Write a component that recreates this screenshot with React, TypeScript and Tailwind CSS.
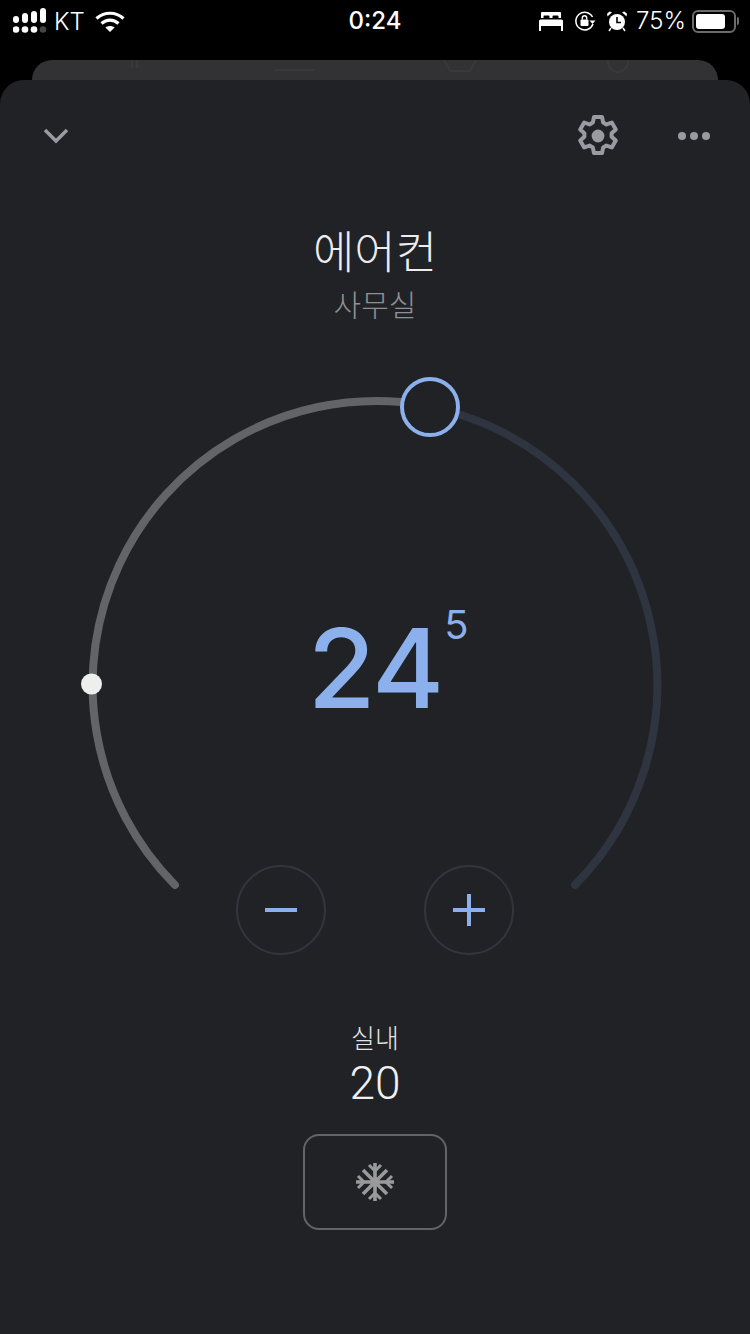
const sans = "font-['Roboto','Noto_Sans_CJK_KR',sans-serif]";
const inter = "font-['Inter',sans-serif]";

function SignalDots() {
  const bars = [
    { x: 0, h: 7 },
    { x: 9, h: 10 },
    { x: 18, h: 12 },
    { x: 27, h: 15 },
  ];
  return (
    <svg width="34" height="32" viewBox="0 0 34 32">
      {bars.map((b, i) => (
        <rect key={i} x={b.x} y={17 - b.h} width="6" height={b.h} rx="3" fill="#fff" />
      ))}
      {[3, 12, 21].map((x) => (
        <circle key={x} cx={x} cy="23.500" r="3.300" fill="#fff" />
      ))}
      <circle cx="30" cy="23.500" r="3.300" fill="#444" />
    </svg>
  );
}

function Wifi() {
  return (
    <svg width="30" height="22" viewBox="0 0 30 22" fill="none" stroke="#fff" strokeWidth="3.200">
      <path d="M1.500 7.500C9 .5 21 .5 28.500 7.500" />
      <path d="M6.500 12.500C11.500 8 18.500 8 23.500 12.500" />
      <path d="M15 21l-4.600-4.600c2.600-2 6.600-2 9.200 0z" fill="#fff" stroke="none" />
    </svg>
  );
}

function Bed() {
  return (
    <svg width="24" height="20" viewBox="0 0 24 20" fill="#fff">
      <path d="M3 1h18a1 1 0 0 1 1 1v5h-2.500V5.500a1 1 0 0 0-1-1h-4a1 1 0 0 0-1 1V7h-3V5.500a1 1 0 0 0-1-1h-4a1 1 0 0 0-1 1V7H2V2a1 1 0 0 1 1-1z" />
      <path d="M1.500 8.500h21A1.500 1.500 0 0 1 24 10v5H0v-5a1.500 1.500 0 0 1 1.500-1.500z" />
      <rect x="0" y="15" width="2" height="5" />
      <rect x="22" y="15" width="2" height="5" />
    </svg>
  );
}

function RotationLock() {
  return (
    <svg width="22" height="22" viewBox="0 0 22 22" fill="none">
      <path d="M18.500 7A8.800 8.800 0 1 0 19 14" stroke="#fff" strokeWidth="1.500" />
      <path d="M15.500 10.500h6l-3 3.500z" fill="#fff" />
      <rect x="6.500" y="9.500" width="8" height="6.500" rx="1" fill="#fff" />
      <path d="M8.300 9.500V8a2.200 2.200 0 0 1 4.400 0v1.500" stroke="#fff" strokeWidth="1.400" />
    </svg>
  );
}

function Alarm() {
  return (
    <svg width="22" height="22" viewBox="0 0 22 22" fill="none">
      <circle cx="11" cy="12" r="8" fill="#fff" />
      <path d="M11 7v5.500h4" stroke="#000" strokeWidth="1.600" />
      <path d="M1.500 6.500L6 2.200 3.600 1.500 1 3.800z" fill="#fff" />
      <path d="M20.500 6.500L16 2.200l2.400-.7L21 3.800z" fill="#fff" />
      <path d="M5 18l-2 3M17 18l2 3" stroke="#fff" strokeWidth="1.500" />
    </svg>
  );
}

function Battery() {
  return (
    <div className="flex items-center">
      <div className="flex h-[23px] w-[44px] items-center rounded-[6px] border-2 border-[#6b6b6b] p-[2px]">
        <div className="h-full w-[29px] rounded-[3px] bg-white" />
      </div>
      <div className="ml-[1px] h-[8px] w-[2px] rounded-r bg-[#6b6b6b]" />
    </div>
  );
}

function StatusBar() {
  return (
    <div className={`relative flex h-[60px] items-start justify-between pl-[13px] pr-[11px] pt-[6px] text-white ${inter}`}>
      <div className="flex items-center">
        <SignalDots />
        <span className="ml-[7px] text-[24px] leading-[30px] font-light">KT</span>
        <div className="ml-[10px]">
          <Wifi />
        </div>
      </div>
      <span className="absolute left-0 right-0 top-[6px] text-center text-[24px] leading-[30px] font-medium">0:24</span>
      <div className="flex items-center">
        <Bed />
        <div className="ml-[11px]">
          <RotationLock />
        </div>
        <div className="ml-[10px]">
          <Alarm />
        </div>
        <span className="ml-[8px] mr-[6px] text-[24px] leading-[30px] font-light">75%</span>
        <Battery />
      </div>
    </div>
  );
}

function Gear() {
  return (
    <svg width="48" height="48" viewBox="0 0 24 24" fill="none" stroke="#9a9ba0" strokeWidth="2" strokeLinejoin="round">
      <path d="M10 2.500h4l.6 2.800 1.600.9 2.700-.9 2 3.400-2.100 1.900v1.800l2.100 1.900-2 3.400-2.700-.9-1.600.9-.6 2.800h-4l-.6-2.800-1.600-.9-2.700.9-2-3.400 2.100-1.900v-1.800L3.100 8.700l2-3.400 2.700.9 1.600-.9z" />
      <circle cx="12" cy="12" r="3.200" fill="#9a9ba0" stroke="none" />
    </svg>
  );
}

function Snowflake() {
  return (
    <svg width="42" height="42" viewBox="0 0 42 42" fill="none" stroke="#9a9a9c" strokeWidth="3.600">
      <path d="M21 2v38M2 21h38M9 9l24 24M33 9L9 33" />
      <path d="M15 4l6 6 6-6M15 38l6-6 6 6M4 15l6 6-6 6M38 15l-6 6 6 6" strokeWidth="3" />
    </svg>
  );
}

function Dial() {
  return (
    <svg className="absolute left-0 top-0" width="750" height="620" viewBox="0 0 750 620" fill="none">
      {/* center of the ring is 375,315 in this box */}
      <path d="M175 515A284 284 0 0 1 401 32" stroke="#636467" strokeWidth="8" strokeLinecap="round" />
      <path d="M458 44A284 284 0 0 1 575 515" stroke="#2f3441" strokeWidth="8" strokeLinecap="round" />
      <circle cx="430" cy="37" r="28" fill="#212226" stroke="#8cb0ec" strokeWidth="4" />
      <circle cx="91.500" cy="314" r="10.500" fill="#eeeeee" />
    </svg>
  );
}

function RoundButton({ plus }: { plus?: boolean }) {
  return (
    <button className="flex h-[90px] w-[90px] items-center justify-center rounded-full border-2 border-[#33353d]">
      <svg width="34" height="34" viewBox="0 0 34 34" fill="none" stroke="#8cb0ec" strokeWidth="4">
        <path d="M1 17h32" />
        {plus && <path d="M17 1v32" />}
      </svg>
    </button>
  );
}

export default function App() {
  return (
    <div className={`flex h-[1334px] w-[750px] flex-col overflow-hidden bg-black ${sans}`}>
      <StatusBar />
      <div className="mx-[32px] h-[20px] overflow-hidden rounded-t-[20px] bg-[#323235]">
        {/* icons of the sheet behind, almost hidden */}
        <svg width="686" height="20" viewBox="0 0 686 20" fill="none" stroke="#39393c" strokeWidth="2">
          <path d="M100 0v8M105 0v8" />
          <path d="M243 10h40" />
          <path d="M412 0l6 11h20l6-11" />
          <circle cx="586" cy="2" r="10" />
        </svg>
      </div>
      <div className="flex flex-1 flex-col rounded-t-[24px] bg-[#212226]">
        <div className="flex h-[112px] items-center justify-between pl-[43px] pr-[40px]">
          <svg width="26" height="16" viewBox="0 0 26 16" fill="none" stroke="#9a9ba0" strokeWidth="3.500">
            <path d="M2 2l11 11L24 2" />
          </svg>
          <div className="flex items-center gap-[56px]">
            <Gear />
            <div className="flex gap-[4px]">
              <span className="h-[8px] w-[8px] rounded-full bg-[#9a9ba0]" />
              <span className="h-[8px] w-[8px] rounded-full bg-[#9a9ba0]" />
              <span className="h-[8px] w-[8px] rounded-full bg-[#9a9ba0]" />
            </div>
          </div>
        </div>

        <div className="flex flex-col items-center">
          <h1 className="mt-[30px] text-[45px] leading-[64px] font-light text-[#ededee]">에어컨</h1>
          <p className="text-[30px] leading-[39px] font-light text-[#8f9093]">사무실</p>
        </div>

        <div className="relative mt-[45px] flex h-[572px] flex-col items-center">
          <Dial />
          <div className={`relative mt-[238px] flex h-[120px] items-start text-[#8cb0ec] ${inter}`}>
            <span className="text-[110px] leading-[120px] font-medium tracking-[-2px]">24</span>
            <span className="absolute left-full top-[-5px] ml-[2px] text-[40px] leading-[44px]">5</span>
          </div>
          <div className="relative mt-[137px] flex gap-[98px]">
            <RoundButton />
            <RoundButton plus />
          </div>
        </div>

        <div className="mt-[77px] flex flex-col items-center">
          <span className="text-[26px] leading-[40px] font-light text-[#e4e4e6]">실내</span>
          <span className="text-[46px] leading-[48px] font-light text-[#f0f0f1]">20</span>
          <button className="mt-[27px] flex h-[96px] w-[144px] items-center justify-center rounded-[16px] border-2 border-[#636467]">
            <Snowflake />
          </button>
        </div>
      </div>
    </div>
  );
}
